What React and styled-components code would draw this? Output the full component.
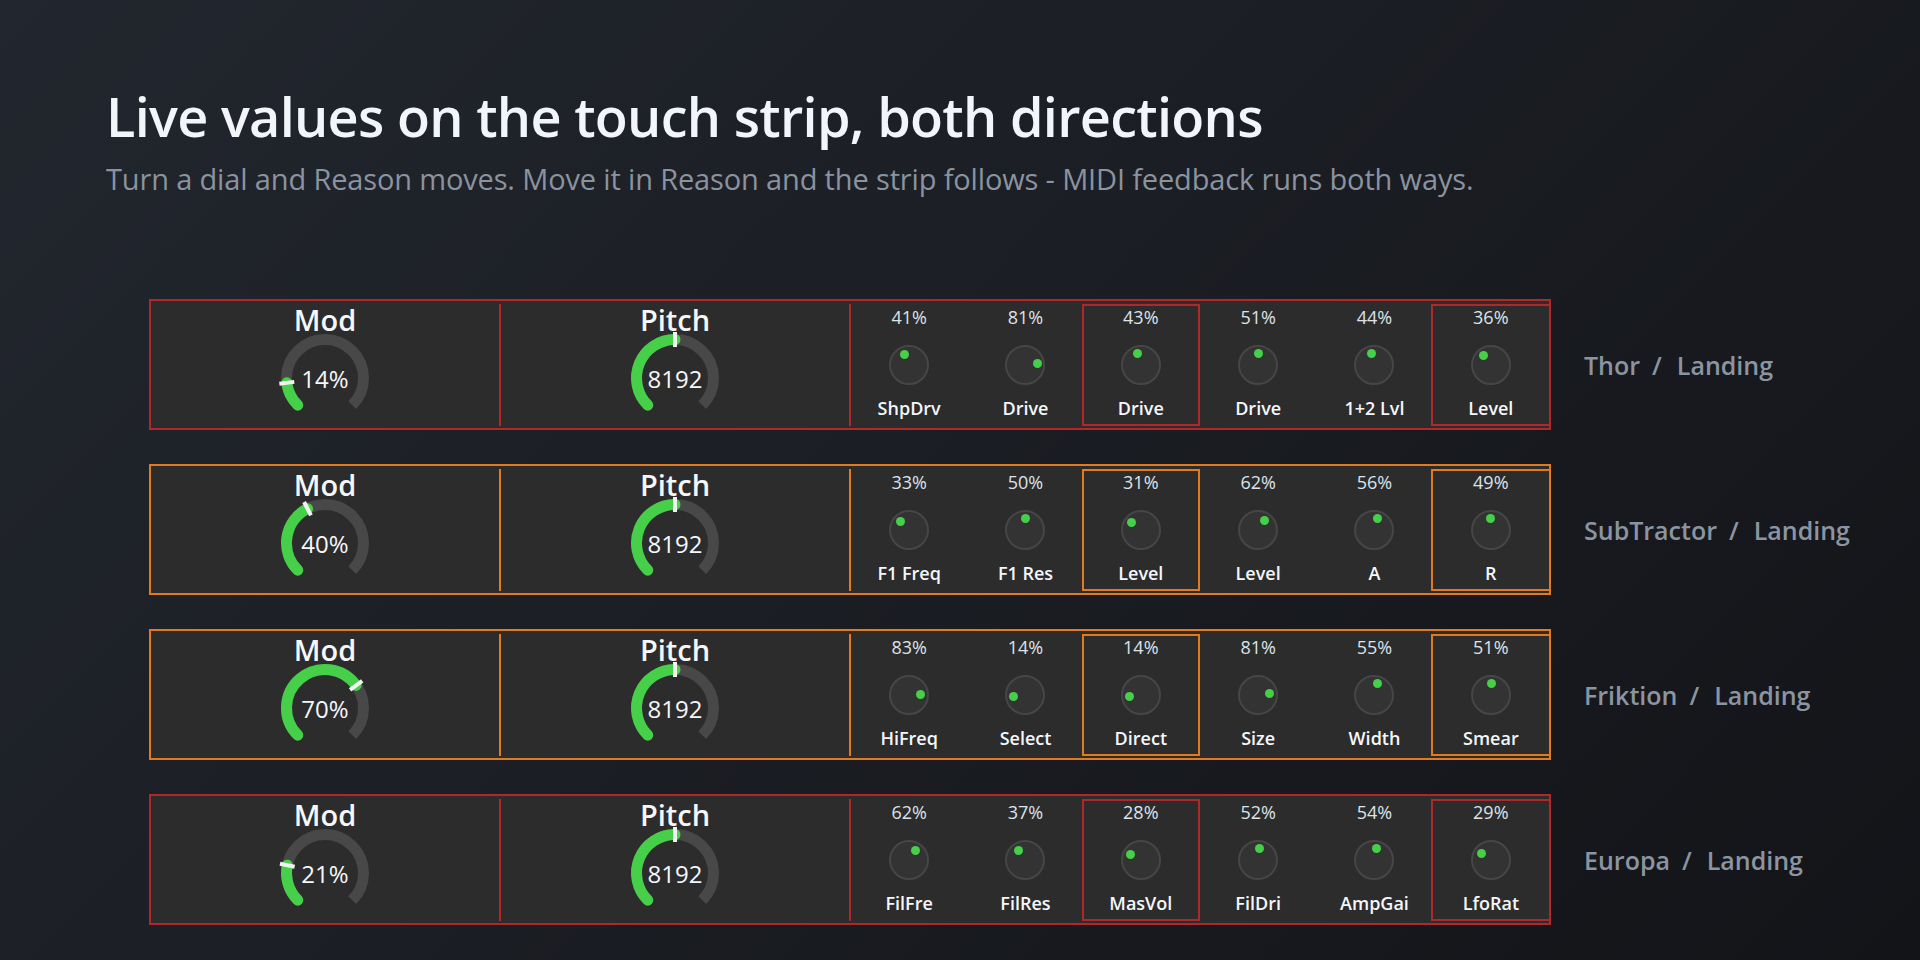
import React from "react";
import styled, { createGlobalStyle } from "styled-components";

const GlobalStyle = createGlobalStyle`
  html, body { margin: 0; padding: 0; height: 100%; }
  body {
    background: linear-gradient(135deg, #22262e 0%, #1b1e24 45%, #131418 100%);
    font-family: "Open Sans", "Noto Sans", sans-serif;
    -webkit-font-smoothing: antialiased;
  }
  * { box-sizing: border-box; }
`;

const COLORS = { red: "#b1282a", orange: "#e27a1f" };
const GREEN = "#46cf48";

const rows = [
  {
    device: "Thor", tone: "red", mod: 14,
    knobs: [[41, "ShpDrv"], [81, "Drive"], [43, "Drive"], [51, "Drive"], [44, "1+2 Lvl"], [36, "Level"]],
  },
  {
    device: "SubTractor", tone: "orange", mod: 40,
    knobs: [[33, "F1 Freq"], [50, "F1 Res"], [31, "Level"], [62, "Level"], [56, "A"], [49, "R"]],
  },
  {
    device: "Friktion", tone: "orange", mod: 70,
    knobs: [[83, "HiFreq"], [14, "Select"], [14, "Direct"], [81, "Size"], [55, "Width"], [51, "Smear"]],
  },
  {
    device: "Europa", tone: "red", mod: 21,
    knobs: [[62, "FilFre"], [37, "FilRes"], [28, "MasVol"], [52, "FilDri"], [54, "AmpGai"], [29, "LfoRat"]],
  },
];

const Page = styled.div`
  min-height: 100vh;
  padding-top: 83px;
`;

const Header = styled.header`
  padding-left: 106px;
`;

const Title = styled.h1`
  margin: 0;
  font-size: 54px;
  line-height: 66px;
  font-weight: 600;
  color: #f2f5f9;
  letter-spacing: -0.7px;
`;

const Subtitle = styled.p`
  margin: 12px 0 0;
  font-size: 29px;
  line-height: 36px;
  font-weight: 400;
  color: #8a939f;
  letter-spacing: -0.15px;
`;

const Rows = styled.div`
  margin-top: 102px;
  padding-left: 149px;
  display: flex;
  flex-direction: column;
  gap: 34px;
`;

const Row = styled.div`
  display: flex;
  align-items: center;
`;

const Panel = styled.div`
  width: 1402px;
  height: 131px;
  border: 2px solid ${(p) => COLORS[p.$tone]};
  background: #2c2c2c;
  padding: 3px 0 2px;
  display: grid;
  grid-template-columns: 348px 350px 1fr;
`;

const Section = styled.div`
  display: flex;
  flex-direction: column;
  align-items: center;
  border-left: ${(p) => (p.$divided ? `2px solid ${COLORS[p.$tone]}` : "none")};
`;

const SectionTitle = styled.div`
  font-size: 29px;
  line-height: 32px;
  font-weight: 600;
  color: #f4f7fb;
  position: relative;
  z-index: 0;
`;

const GaugeWrap = styled.div`
  position: relative;
  width: 96px;
  height: 96px;
  margin-top: -6px;
  z-index: 1;
`;

const GaugeValue = styled.div`
  position: absolute;
  inset: 0;
  display: flex;
  align-items: center;
  justify-content: center;
  padding-top: 2px;
  font-size: 24px;
  line-height: 24px;
  color: #f4f7fb;
`;

const KnobGrid = styled.div`
  display: grid;
  grid-template-columns: repeat(6, 1fr);
  border-left: 2px solid ${(p) => COLORS[p.$tone]};
`;

const KnobCell = styled.div`
  display: flex;
  flex-direction: column;
  align-items: center;
  border: 2px solid ${(p) => (p.$active ? COLORS[p.$tone] : "transparent")};
  margin-left: ${(p) => (p.$active ? "-2px" : "0")};
  margin-right: ${(p) => (p.$last ? "-2px" : "0")};
`;

const Percent = styled.div`
  font-size: 18px;
  line-height: 22px;
  color: #dce3ea;
`;

const KnobBody = styled.div`
  position: relative;
  width: 40px;
  height: 40px;
  margin-top: 17px;
  border-radius: 50%;
  border: 2px solid #464646;
  background: #333333;
`;

const KnobDot = styled.span`
  position: absolute;
  width: 9px;
  height: 9px;
  border-radius: 50%;
  background: ${GREEN};
`;

const KnobLabel = styled.div`
  margin-top: 12px;
  font-size: 18px;
  line-height: 22px;
  font-weight: 600;
  color: #f4f7fb;
  white-space: nowrap;
`;

const DeviceLabel = styled.div`
  margin-left: 33px;
  display: flex;
  align-items: center;
  font-size: 25px;
  line-height: 30px;
  font-weight: 600;
  color: #8b95a2;
`;

const Slash = styled.span`
  margin: 0 15px 0 12px;
`;

const polar = (cx, cy, r, deg) => {
  const a = (deg * Math.PI) / 180;
  return [cx + r * Math.sin(a), cy - r * Math.cos(a)];
};

const arcPath = (cx, cy, r, a0, a1) => {
  const [x0, y0] = polar(cx, cy, r, a0);
  const [x1, y1] = polar(cx, cy, r, a1);
  const large = a1 - a0 > 180 ? 1 : 0;
  return `M ${x0.toFixed(2)} ${y0.toFixed(2)} A ${r} ${r} 0 ${large} 1 ${x1.toFixed(2)} ${y1.toFixed(2)}`;
};

function Gauge({ value, label }) {
  const c = 48;
  const r = 38.5;
  const end = -135 + (value / 100) * 270;
  const [tx0, ty0] = polar(c, c, 31, end);
  const [tx1, ty1] = polar(c, c, 46, end);
  return (
    <GaugeWrap>
      <svg width="96" height="96" viewBox="0 0 96 96">
        <path d={arcPath(c, c, r, -135, 135)} fill="none" stroke="#484848" strokeWidth="11" />
        <path d={arcPath(c, c, r, -135, end)} fill="none" stroke={GREEN} strokeWidth="11" strokeLinecap="round" />
        <line x1={tx0} y1={ty0} x2={tx1} y2={ty1} stroke="#f2f2f2" strokeWidth="4" />
      </svg>
      <GaugeValue>{label}</GaugeValue>
    </GaugeWrap>
  );
}

function Knob({ value }) {
  const angle = -135 + (value / 100) * 270;
  const [x, y] = polar(18, 18, 11.7, angle);
  return (
    <KnobBody>
      <KnobDot style={{ left: x - 4.5, top: y - 4.5 }} />
    </KnobBody>
  );
}

function Strip({ row }) {
  return (
    <Row>
      <Panel $tone={row.tone}>
        <Section>
          <SectionTitle>Mod</SectionTitle>
          <Gauge value={row.mod} label={`${row.mod}%`} />
        </Section>
        <Section $divided $tone={row.tone}>
          <SectionTitle>Pitch</SectionTitle>
          <Gauge value={50} label="8192" />
        </Section>
        <KnobGrid $tone={row.tone}>
          {row.knobs.map(([v, name], i) => (
            <KnobCell key={i} $tone={row.tone} $active={i === 2 || i === 5} $last={i === 5}>
              <Percent>{v}%</Percent>
              <Knob value={v} />
              <KnobLabel>{name}</KnobLabel>
            </KnobCell>
          ))}
        </KnobGrid>
      </Panel>
      <DeviceLabel>
        <span>{row.device}</span>
        <Slash>/</Slash>
        <span>Landing</span>
      </DeviceLabel>
    </Row>
  );
}

export default function App() {
  return (
    <>
      <GlobalStyle />
      <Page>
        <Header>
          <Title>Live values on the touch strip, both directions</Title>
          <Subtitle>
            Turn a dial and Reason moves. Move it in Reason and the strip follows - MIDI feedback runs both ways.
          </Subtitle>
        </Header>
        <Rows>
          {rows.map((row) => (
            <Strip key={row.device} row={row} />
          ))}
        </Rows>
      </Page>
    </>
  );
}
